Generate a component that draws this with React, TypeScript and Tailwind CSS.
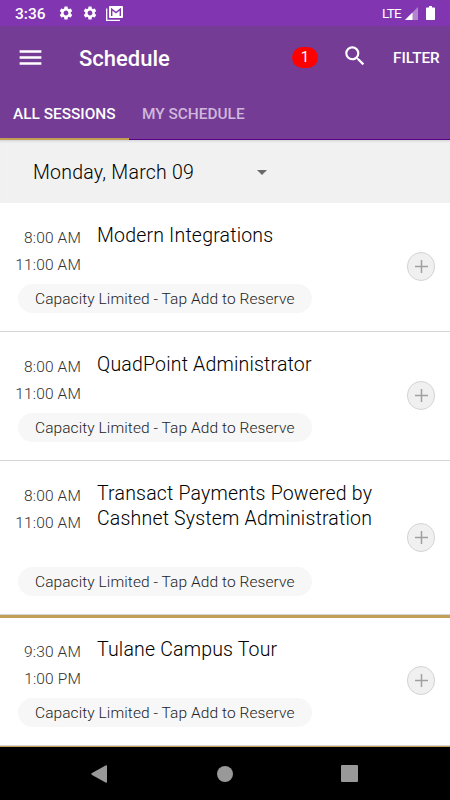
import type { JSX } from 'react';
import clsx from 'clsx';
import { MdSettings, MdSearch, MdMenu, MdArrowDropDown } from 'react-icons/md';

interface Session {
  start: string;
  end: string;
  title: string[];
}

interface SessionRowProps {
  session: Session;
  afterDivider?: boolean;
}

const MORNING_SESSIONS: Session[] = [
  { start: '8:00 AM', end: '11:00 AM', title: ['Modern Integrations'] },
  { start: '8:00 AM', end: '11:00 AM', title: ['QuadPoint Administrator'] },
  {
    start: '8:00 AM',
    end: '11:00 AM',
    title: ['Transact Payments Powered by', 'Cashnet System Administration']
  }
];

const CAMPUS_TOUR: Session = { start: '9:30 AM', end: '1:00 PM', title: ['Tulane Campus Tour'] };

function StatusBar(): JSX.Element {
  return (
    <div className="flex h-[26px] items-center bg-[#8235b0] pl-[15px] text-white">
      <span className="w-[42.5px] pt-[2px] text-[15.5px] font-medium leading-[26px]">3:36</span>
      <MdSettings className="mr-2 size-4" />
      <MdSettings className="mr-2 size-4" />
      <svg viewBox="0 0 17 15" className="h-[15px] w-[17px]" fill="none" aria-hidden="true">
        <path d="M.7 2.5v11.8H14" stroke="white" strokeWidth="1.3" />
        <rect x="3" y="0" width="14" height="12" rx="1" fill="white" />
        <path d="M5.7 10V3.2L10 6.5l4.3-3.3V10" stroke="#8235b0" strokeWidth="1.4" />
      </svg>
      <span className="ml-auto text-[13.5px] leading-[26px] tracking-[-0.7px]">LTE</span>
      <svg viewBox="0 0 13 13" className="ml-[4px] size-[13px]" aria-hidden="true">
        <path d="M13 0v13H0z" fill="white" fillOpacity="0.4" />
        <path d="M7.5 5.5V13H0z" fill="white" />
      </svg>
      <svg viewBox="0 0 9 14" className="ml-2 mr-[15px] h-[14px] w-[9px]" aria-hidden="true">
        <path d="M3 0h3v1.5h2.2q.8 0 .8.8v10.9q0 .8-.8.8H.8q-.8 0-.8-.8V2.3q0-.8.8-.8H3z" fill="white" />
      </svg>
    </div>
  );
}

function Toolbar(): JSX.Element {
  return (
    <header className="flex h-[62px] items-center bg-[#743c95] pl-4 text-white">
      <button aria-label="Open menu">
        <MdMenu className="size-[29px]" />
      </button>
      <h1 className="ml-[34px] pt-[3px] text-[22px] font-medium leading-none">Schedule</h1>
      <span className="ml-auto flex h-[21px] w-[26px] items-center justify-center rounded-full bg-[#fe0000] pt-px text-[15px]">
        1
      </span>
      <button aria-label="Search" className="ml-[24px]">
        <MdSearch className="size-[26px] -translate-y-px" />
      </button>
      <button className="ml-[25px] w-[57px] pt-[2px] text-left text-[15.3px] font-medium">FILTER</button>
    </header>
  );
}

function Tabs(): JSX.Element {
  return (
    <nav className="flex h-[52px] bg-[#743c95] text-[15.4px] font-medium leading-[53px] whitespace-nowrap">
      <button className="h-[52px] w-[129px] border-b-2 border-[#c1a055] pl-[13px] text-left text-white">
        ALL SESSIONS
      </button>
      <button className="h-[52px] flex-1 border-b border-[#590083] pl-[13px] text-left text-[#d0b8dc]">
        MY SCHEDULE
      </button>
    </nav>
  );
}

function DatePicker(): JSX.Element {
  return (
    <div className="flex h-[63px] items-center bg-[#f1f1f1] pl-[33px] shadow-[inset_0_3px_3px_-2px_#cfcfcf]">
      <span className="w-[217px] pt-[3px] text-[19.5px] font-light leading-none tracking-[0.24px] whitespace-nowrap text-black">
        Monday, March 09
      </span>
      <MdArrowDropDown className="size-6 text-[#6a6a6a]" />
    </div>
  );
}

function SessionRow({ session, afterDivider = false }: SessionRowProps): JSX.Element {
  return (
    <article
      className={clsx(
        'flex border-b border-[#d5d5d5] bg-white pb-[18px]',
        afterDivider ? 'pt-[18px]' : 'pt-[19px]'
      )}
    >
      <div className="flex flex-1 flex-col">
        <div className={clsx('flex', session.title.length > 1 ? 'h-[87px]' : 'h-[62px]')}>
          <div className="w-[81px] pt-[3px] text-right text-[15.5px] leading-[26.5px] font-light tracking-[0.15px] whitespace-nowrap text-[#303030]">
            <p>{session.start}</p>
            <p>{session.end}</p>
          </div>
          <h2 className="ml-4 pt-px text-[19.5px] leading-[25px] font-light tracking-[0.19px] whitespace-nowrap text-black">
            {session.title.map((line) => (
              <span key={line} className="block">{line}</span>
            ))}
          </h2>
        </div>
        <p className="ml-[18px] h-[29px] w-[294px] rounded-full bg-[#f7f7f7] pl-[17px] text-[15.5px] leading-[31px] font-light tracking-[0.08px] whitespace-nowrap text-[#222222]">
          Capacity Limited - Tap Add to Reserve
        </p>
      </div>
      <button
        aria-label="Add session"
        className="mr-[15px] mb-[2px] flex h-[29px] w-[28px] items-center justify-center self-center rounded-full border border-[#d4d4d4] bg-[#f0f0f0]"
      >
        <svg viewBox="0 0 13 13" className="size-[13px]" aria-hidden="true">
          <path d="M6.5 0v13M0 6.5h13" stroke="#a0a0a0" strokeWidth="1.5" />
        </svg>
      </button>
    </article>
  );
}

function NavigationBar(): JSX.Element {
  return (
    <footer className="flex flex-1 items-center bg-black pl-[91px] text-[#999999]">
      <svg viewBox="0 0 16 18" className="h-[18px] w-4" fill="currentColor" aria-hidden="true">
        <path d="M15 .2Q16 0 16 1v16q0 1-1 .8L.6 9.7Q0 9 .6 8.3z" />
      </svg>
      <span className="ml-[110px] size-4 rounded-full bg-current" />
      <span className="ml-[108px] size-[17px] rounded-[1px] bg-current" />
    </footer>
  );
}

export default function App(): JSX.Element {
  return (
    <div className="flex h-[800px] w-[450px] flex-col overflow-hidden bg-white font-['Roboto',sans-serif]">
      <StatusBar />
      <Toolbar />
      <Tabs />
      <DatePicker />
      <main>
        {MORNING_SESSIONS.map((session) => (
          <SessionRow key={session.title[0]} session={session} />
        ))}
        <div className="h-[3px] bg-[#c1a055]" />
        <SessionRow session={CAMPUS_TOUR} afterDivider />
        <div className="h-px bg-[#c1a055]" />
      </main>
      <NavigationBar />
    </div>
  );
}
